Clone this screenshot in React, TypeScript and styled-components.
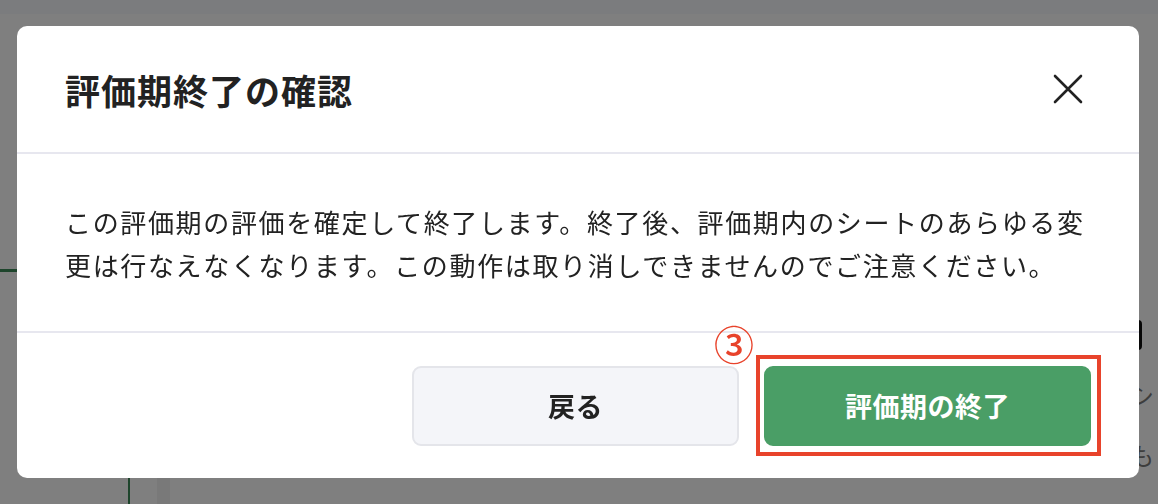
import React from "react";
import styled, { createGlobalStyle } from "styled-components";

const GlobalStyle = createGlobalStyle`
  html, body {
    margin: 0;
    padding: 0;
    background: #ffffff;
  }
  body {
    font-family: "Noto Sans CJK JP", "Noto Sans", sans-serif;
    color: #222222;
  }
`;

/* ---------- page behind the dialog ---------- */

const Page = styled.div`
  width: 1158px;
  height: 504px;
  overflow: hidden;
  display: flex;
  flex-direction: column;
  background: #ffffff;
`;

const TopBar = styled.div`
  height: 14px;
  flex: none;
  background: #f6f8fc;
`;

const MainRow = styled.div`
  flex: 1;
  display: flex;
`;

const Sidebar = styled.nav`
  width: 130px;
  flex: none;
  display: flex;
  flex-direction: column;
`;

const NavBlock = styled.div`
  height: 255px;
  border-bottom: 3px solid #3d8a58;
`;

const NavTree = styled.div`
  flex: 1;
  border-right: 2px solid #3d8a58;
`;

const Gutter = styled.div`
  width: 40px;
  flex: none;
  display: flex;
  flex-direction: column;
  justify-content: flex-end;
  align-items: flex-end;
`;

const GutterShade = styled.div`
  width: 13px;
  height: 60px;
  background: #f2f2f2;
`;

const ContentCard = styled.section`
  flex: 1;
  display: flex;
  flex-direction: column;
  justify-content: flex-end;
  padding: 0 0 26px 60px;
`;

const CardLine = styled.p`
  margin: 0;
  font-size: 22px;
  line-height: 26px;
  color: #666666;
  white-space: nowrap;
`;

const RightPane = styled.aside`
  width: 22px;
  flex: none;
  padding-top: 306px;
  display: flex;
  flex-direction: column;
  gap: 30px;
  overflow: hidden;
`;

const PaneIcon = styled.div`
  width: 24px;
  height: 30px;
  border: 3px solid #111111;
  border-radius: 4px;
  box-sizing: border-box;
  margin-left: -18px;
`;

const PaneText = styled.span`
  font-size: 24px;
  line-height: 30px;
  color: #7a7a7a;
  white-space: nowrap;
  margin-left: -6px;
`;

/* ---------- dialog ---------- */

const Overlay = styled.div`
  position: fixed;
  inset: 0;
  background: rgba(0, 0, 0, 0.5);
  display: flex;
  align-items: center;
  justify-content: center;
`;

const Dialog = styled.div`
  width: 1122px;
  margin-left: -2px;
  background: #ffffff;
  border-radius: 10px;
  display: flex;
  flex-direction: column;
`;

const Header = styled.header`
  height: 126px;
  padding: 0 49px 0 48px;
  display: flex;
  align-items: center;
  justify-content: space-between;
  border-bottom: 2px solid #e7e7ef;
`;

const Title = styled.h2`
  margin: 0;
  font-size: 35px;
  font-weight: 700;
  letter-spacing: 1px;
  color: #222222;
`;

const CloseButton = styled.button`
  width: 44px;
  height: 44px;
  padding: 0;
  border: none;
  background: transparent;
  display: flex;
  align-items: center;
  justify-content: center;
  cursor: pointer;
`;

const Body = styled.div`
  padding: 46px 48px 45px 48px;
  border-bottom: 2px solid #e7e7ef;
`;

const Message = styled.p`
  margin: 0;
  font-size: 26px;
  line-height: 43px;
  letter-spacing: 1.65px;
  color: #222222;
`;

const Footer = styled.footer`
  height: 145px;
  padding: 0 48px 0 0;
  box-sizing: border-box;
  display: flex;
  align-items: center;
  justify-content: flex-end;
  gap: 25px;
`;

const Button = styled.button<{ $primary?: boolean }>`
  width: 327px;
  height: 80px;
  border-radius: 9px;
  font-family: inherit;
  font-size: 27px;
  font-weight: 700;
  letter-spacing: 0.5px;
  cursor: pointer;
  border: 2px solid ${(p) => (p.$primary ? "#4a9e66" : "#e4e5ea")};
  background: ${(p) => (p.$primary ? "#4a9e66" : "#f4f5f9")};
  color: ${(p) => (p.$primary ? "#ffffff" : "#222222")};
`;

const Highlight = styled.div`
  position: relative;
  display: flex;
`;

const HighlightFrame = styled.div`
  position: absolute;
  top: -11px;
  left: -8px;
  right: -10px;
  bottom: -10px;
  border: 4px solid #e8432b;
  pointer-events: none;
`;

const StepBadge = styled.span`
  position: absolute;
  top: -48px;
  left: -50px;
  font-size: 40px;
  line-height: 50px;
  font-weight: 500;
  color: #e8432b;
`;

const CloseIcon: React.FC = () => (
  <svg width="30" height="30" viewBox="0 0 30 30" fill="none">
    <path
      d="M2 2 L28 28 M28 2 L2 28"
      stroke="#222222"
      strokeWidth="2.6"
      strokeLinecap="round"
    />
  </svg>
);

const App: React.FC = () => {
  return (
    <>
      <GlobalStyle />
      <Page>
        <TopBar />
        <MainRow>
          <Sidebar>
            <NavBlock />
            <NavTree />
          </Sidebar>
          <Gutter>
            <GutterShade />
          </Gutter>
          <ContentCard>
            <CardLine>評価期の評価を確定すると、シートを変更できなくなります</CardLine>
          </ContentCard>
          <RightPane>
            <PaneIcon />
            <PaneText>シ</PaneText>
            <PaneText>も</PaneText>
          </RightPane>
        </MainRow>
      </Page>

      <Overlay>
        <Dialog role="dialog" aria-labelledby="dialog-title">
          <Header>
            <Title id="dialog-title">評価期終了の確認</Title>
            <CloseButton aria-label="閉じる">
              <CloseIcon />
            </CloseButton>
          </Header>
          <Body>
            <Message>
              この評価期の評価を確定して終了します。終了後、評価期内のシートのあらゆる変更は行なえなくなります。この動作は取り消しできませんのでご注意ください。
            </Message>
          </Body>
          <Footer>
            <Button>戻る</Button>
            <Highlight>
              <StepBadge>③</StepBadge>
              <Button $primary>評価期の終了</Button>
              <HighlightFrame />
            </Highlight>
          </Footer>
        </Dialog>
      </Overlay>
    </>
  );
};

export default App;
